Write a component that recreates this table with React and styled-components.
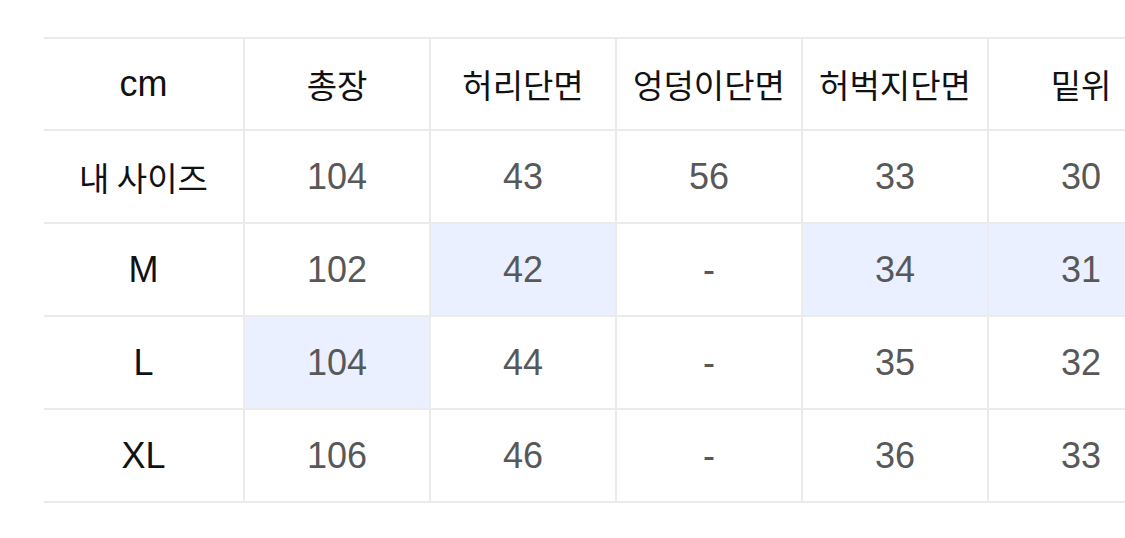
import React from "react";
import styled, { createGlobalStyle } from "styled-components";

const Global = createGlobalStyle`
  html, body { margin: 0; padding: 0; background: #ffffff; }
  body { font-family: "Liberation Sans", "Noto Sans CJK KR", sans-serif; }
`;

const Page = styled.div`
  width: 1125px;
  height: 538px;
  overflow: hidden;
  padding: 37px 0 0 44px;
  box-sizing: border-box;
`;

const Grid = styled.div`
  display: grid;
  grid-template-columns: 199px repeat(5, 186px);
  width: max-content;
`;

const Cell = styled.div`
  box-sizing: border-box;
  height: ${(p) => (p.$head ? 94 : 93)}px;
  display: flex;
  align-items: center;
  justify-content: center;
  border-bottom: 2px solid #ebebeb;
  border-top: ${(p) => (p.$head ? "2px solid #ebebeb" : "none")};
  border-left: ${(p) => (p.$first ? "none" : "2px solid #ebebeb")};
  background: ${(p) => (p.$hl ? "#eaf0ff" : "#ffffff")};
  color: ${(p) => (p.$label ? "#111111" : "#585858")};
  font-size: ${(p) => (p.$kor ? 33 : 36)}px;
  font-weight: 400;
  font-family: ${(p) =>
    p.$kor
      ? '"Noto Sans CJK KR", sans-serif'
      : '"Liberation Sans", "Noto Sans CJK KR", sans-serif'};
  white-space: nowrap;
`;

const headers = ["총장", "허리단면", "엉덩이단면", "허벅지단면", "밑위"];

const rows = [
  { label: "내 사이즈", kor: true, vals: ["104", "43", "56", "33", "30"], hl: [] },
  { label: "M", vals: ["102", "42", "-", "34", "31"], hl: [1, 3, 4] },
  { label: "L", vals: ["104", "44", "-", "35", "32"], hl: [0] },
  { label: "XL", vals: ["106", "46", "-", "36", "33"], hl: [] },
];

export default function App() {
  return (
    <>
      <Global />
      <Page>
        <Grid>
          <Cell $head $first $label>cm</Cell>
          {headers.map((h) => (
            <Cell key={h} $head $label $kor>
              {h}
            </Cell>
          ))}
          {rows.map((r) => (
            <React.Fragment key={r.label}>
              <Cell $first $label $kor={r.kor}>
                {r.label}
              </Cell>
              {r.vals.map((v, i) => (
                <Cell key={i} $hl={r.hl.includes(i)}>
                  {v}
                </Cell>
              ))}
            </React.Fragment>
          ))}
        </Grid>
      </Page>
    </>
  );
}
